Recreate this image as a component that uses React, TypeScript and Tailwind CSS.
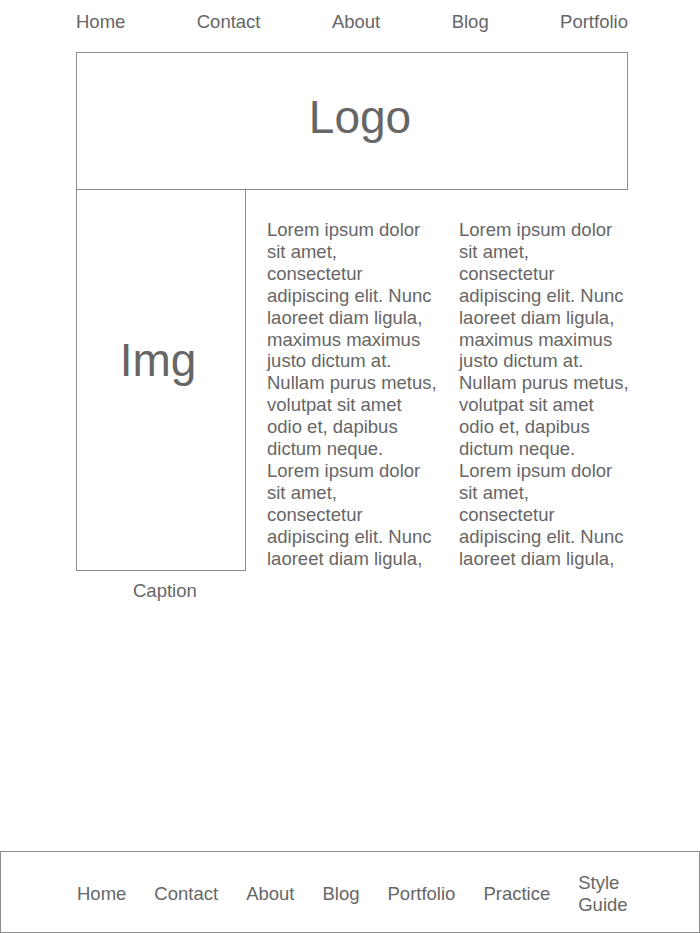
import React from "react";

const lines = [
  "Lorem ipsum dolor",
  "sit amet,",
  "consectetur",
  "adipiscing elit. Nunc",
  "laoreet diam ligula,",
  "maximus maximus",
  "justo dictum at.",
  "Nullam purus metus,",
  "volutpat sit amet",
  "odio et, dapibus",
  "dictum neque.",
  "Lorem ipsum dolor",
  "sit amet,",
  "consectetur",
  "adipiscing elit. Nunc",
  "laoreet diam ligula,",
];

function Column() {
  return (
    <p className="w-[172px] whitespace-nowrap">
      {lines.map((l, i) => (
        <span key={i} className="block">
          {l}
        </span>
      ))}
    </p>
  );
}

export default function App() {
  const font = { fontFamily: '"Liberation Sans", Arial, Helvetica, sans-serif' };
  return (
    <div className="min-h-[933px] flex flex-col bg-white text-[#666666]" style={font}>
      <nav className="ml-[76px] w-[552px] pt-[11px] flex justify-between text-[18.5px] leading-[22px]">
        <span>Home</span>
        <span>Contact</span>
        <span>About</span>
        <span>Blog</span>
        <span>Portfolio</span>
      </nav>
      <div className="ml-[76px] mt-[19px] w-[552px] h-[138px] border border-[#8c8c8c] flex items-center justify-center pl-[16px] pb-[8px]">
        <span className="text-[46px] leading-none">Logo</span>
      </div>
      <div className="ml-[76px] -mt-px flex">
        <div className="flex flex-col">
          <div className="w-[170px] h-[382px] border border-[#8c8c8c] flex items-center justify-center pb-[40px] pr-[6px]">
            <span className="text-[46px] leading-none">Img</span>
          </div>
          <div className="pl-[57px] pt-[9px] text-[18.5px] leading-[22px]">Caption</div>
        </div>
        <div className="ml-[21px] pt-[30px] flex gap-[20px] text-[18.5px] leading-[21.9px]">
          <Column />
          <Column />
        </div>
      </div>
      <footer className="mt-auto h-[82px] w-full border border-[#8c8c8c] flex items-center pl-[76px] pt-[4px] gap-[28px] text-[18.5px] leading-[22px]">
        <span>Home</span>
        <span>Contact</span>
        <span>About</span>
        <span>Blog</span>
        <span>Portfolio</span>
        <span>Practice</span>
        <span className="w-[52px]">Style Guide</span>
      </footer>
    </div>
  );
}
